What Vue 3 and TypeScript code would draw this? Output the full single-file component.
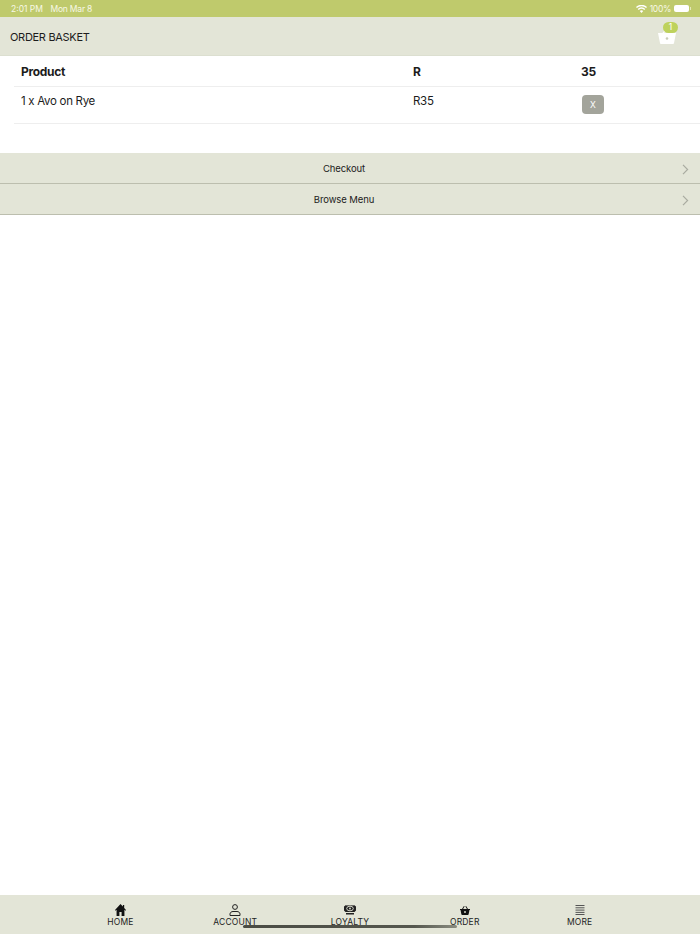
<script setup lang="ts">
const tabs = ['HOME', 'ACCOUNT', 'LOYALTY', 'ORDER', 'MORE']
</script>

<template>
  <div class="page">
    <div class="status">
      <div class="status-left"><span>2:01 PM</span><span>Mon Mar 8</span></div>
      <div class="status-right">
        <svg width="11" height="8" viewBox="0 0 11 8"><path d="M5.5 8 3.8 6.100a2.400 2.400 0 0 1 3.400 0L5.500 8ZM2.700 5 1.700 3.900a5.400 5.400 0 0 1 7.600 0L8.300 5a4 4 0 0 0-5.600 0ZM.9 3 0 2a7.900 7.900 0 0 1 11 0l-.9 1a6.600 6.600 0 0 0-9.200 0Z" fill="#fff"/></svg>
        <span>100%</span>
        <span class="battery"><i></i></span>
      </div>
    </div>
    <header class="head">
      <span class="title">ORDER BASKET</span>
      <div class="basket">
        <svg width="18" height="14" viewBox="0 0 18 14"><path d="M4 4.500 7 .8" fill="none" stroke="#fff" stroke-width="1.200"/><path d="M0 3h18l-2 10a1 1 0 0 1-1 1H3a1 1 0 0 1-1-1L0 3Z" fill="#fff"/><circle cx="9" cy="8.500" r="1.300" fill="#c9ccb8"/></svg>
        <span class="badge">1</span>
      </div>
    </header>
    <div class="table">
      <div class="row row-head"><span>Product</span><span>R</span><span>35</span></div>
      <div class="row row-item"><span>1 x Avo on Rye</span><span>R35</span><span><button class="remove">X</button></span></div>
    </div>
    <div class="links">
      <div class="link">Checkout<svg class="chev" width="7" height="11" viewBox="0 0 7 11"><path d="m1 .8 4.600 4.700L1 10.200" fill="none" stroke="#a9aba0" stroke-width="1.200"/></svg></div>
      <div class="link">Browse Menu<svg class="chev" width="7" height="11" viewBox="0 0 7 11"><path d="m1 .8 4.600 4.700L1 10.200" fill="none" stroke="#a9aba0" stroke-width="1.200"/></svg></div>
    </div>
    <div class="spacer"></div>
    <nav class="tabs">
      <div v-for="t in tabs" :key="t" class="tab">
        <svg v-if="t === 'HOME'" width="11" height="12" viewBox="0 0 14 12" preserveAspectRatio="none"><path d="M7 0 0 6l.7.800L2 5.800V12h3.600V8h2.800v4H12V5.800l1.300 1 .7-.8-2.300-2V1h-1.600v1.600L7 0Z" fill="#111"/></svg>
        <svg v-else-if="t === 'ACCOUNT'" width="12" height="12" viewBox="0 0 12 12"><circle cx="6" cy="3" r="2.400" fill="none" stroke="#222" stroke-width="1"/><path d="M1 11.500V10c0-1.500 1.500-2.500 3-2.500h4c1.500 0 3 1 3 2.500v1.500H1Z" fill="none" stroke="#222" stroke-width="1"/></svg>
        <svg v-else-if="t === 'LOYALTY'" width="12" height="12" viewBox="0 0 12 12"><path d="M2 1 3 1.800 4 1l1 .8L6 1l1 .8L8 1l1 .8L10 1l2 1.500v4L10.500 8h-9L0 6.500v-4L2 1Zm0 8h8v1.500H2V9Z" fill="#222"/><ellipse cx="6" cy="4.500" rx="3.300" ry="2.300" fill="none" stroke="#e3e5d7" stroke-width=".9"/><circle cx="6" cy="4.500" r=".9" fill="#e3e5d7"/></svg>
        <svg v-else-if="t === 'ORDER'" width="10" height="12" viewBox="0 0 11 12"><path d="M0 5h2.200L4.300 1.500l.8.500L3.400 5h4.200L5.900 2l.8-.5L8.800 5H11v1h-.6l-.9 4.800a.9.900 0 0 1-.9.700H2.400a.9.900 0 0 1-.9-.7L.6 6H0V5Z" fill="#111"/><circle cx="5.500" cy="8.200" r="1" fill="#e3e5d7"/></svg>
        <svg v-else width="10" height="12" viewBox="0 0 10 12"><path d="M.5 1.500h9M.5 3.800h9M.5 6.100h9M.5 8.400h9M.5 10.500h9" stroke="#555" stroke-width="1"/></svg>
        <span>{{ t }}</span>
      </div>
    </nav>
    <div class="indicator"></div>
  </div>
</template>

<style scoped>
.page {
  width: 700px;
  height: 934px;
  position: relative;
  display: flex;
  flex-direction: column;
  background: #fff;
  overflow: hidden;
  font-family: Inter, "Liberation Sans", sans-serif;
  color: #1c1c1c;
}
.status {
  height: 17px;
  flex: none;
  background: #bfca6c;
  color: #f7f8e6;
  font-size: 8.500px;
  padding: 0 11px;
  display: flex;
  align-items: center;
  justify-content: space-between;
}
.status-left { display: flex; gap: 7.500px; }
.status-left span:last-child { letter-spacing: -.2px; }
.status-right { display: flex; align-items: center; gap: 3px; letter-spacing: -.3px; }
.battery {
  width: 15px;
  height: 7px;
  border-radius: 2px;
  background: #fff;
  display: block;
  position: relative;
}
.battery i {
  position: absolute;
  right: -2px;
  top: 2px;
  width: 1px;
  height: 3px;
  background: #e4e8b8;
}
.head {
  height: 39px;
  flex: none;
  box-sizing: border-box;
  background: #e3e5d7;
  border-bottom: 1px solid #dcdfd0;
  padding: 0 10px;
  display: flex;
  align-items: center;
  justify-content: space-between;
}
.title { font-size: 11px; letter-spacing: -.3px; padding-top: 2px; }
.basket {
  width: 34px;
  height: 39px;
  position: relative;
  margin-right: 6px;
}
.basket svg { position: absolute; left: 8px; top: 13px; }
.badge {
  position: absolute;
  left: 13px;
  top: 5px;
  width: 15px;
  height: 11px;
  border-radius: 6px;
  background: #bed25c;
  color: #fff;
  font-size: 8.500px;
  line-height: 11px;
  text-align: center;
}
.table { margin-left: 14px; font-size: 12px; }
.row {
  display: grid;
  grid-template-columns: 392px 168px 1fr;
  border-bottom: 1px solid #eeeeee;
  box-sizing: border-box;
}
.row > span { padding-left: 7px; }
.row-head {
  height: 31px;
  align-items: center;
  font-weight: 700;
  letter-spacing: -.3px;
}
.row-item { height: 37px; padding-top: 7px; font-size: 11.500px; letter-spacing: -.3px; }
.remove {
  display: block;
  width: 22px;
  height: 19px;
  margin: 1px 0 0 1px;
  padding: 0;
  border: 0;
  border-radius: 4px;
  background: #a3a49b;
  color: #fff;
  font: 8.500px Inter, "Liberation Sans", sans-serif;
}
.links { margin-top: 29px; }
.link {
  height: 31px;
  box-sizing: border-box;
  position: relative;
  background: #e3e5d7;
  border-bottom: 1px solid #bcbeae;
  display: flex;
  align-items: center;
  justify-content: center;
  padding-right: 12px;
  font-size: 9.500px;
  letter-spacing: -.1px;
}
.chev { position: absolute; right: 11px; top: 11px; }
.spacer { flex: 1; }
.tabs {
  height: 39px;
  flex: none;
  background: #e3e5d7;
  display: grid;
  grid-template-columns: repeat(5, 114.800px);
  justify-content: center;
  font-size: 8.500px;
}
.tab {
  display: flex;
  flex-direction: column;
  align-items: center;
  padding-top: 9px;
}
.tab span { line-height: 12px; letter-spacing: .15px; }
.indicator {
  position: absolute;
  left: 243px;
  top: 925px;
  width: 214px;
  height: 3px;
  border-radius: 2px;
  background: linear-gradient(90deg, #4a4c44, #55574e 80%, #8a8c80);
}
</style>
